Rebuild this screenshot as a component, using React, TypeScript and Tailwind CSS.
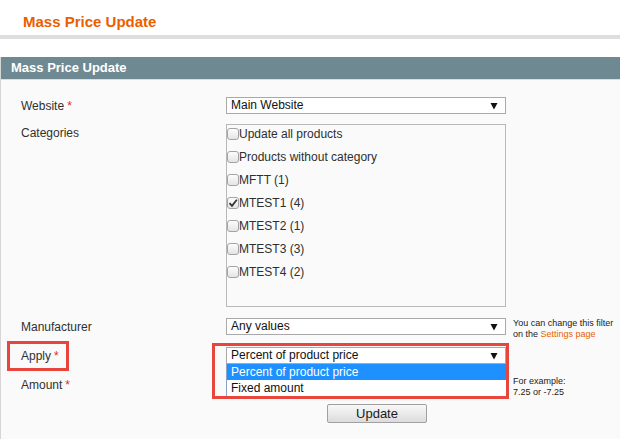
import { useState } from "react";

const font = { fontFamily: '"Liberation Sans", Arial, sans-serif' };

const categories = [
  { label: "Update all products", checked: false },
  { label: "Products without category", checked: false },
  { label: "MFTT (1)", checked: false },
  { label: "MTEST1 (4)", checked: true },
  { label: "MTEST2 (1)", checked: false },
  { label: "MTEST3 (3)", checked: false },
  { label: "MTEST4 (2)", checked: false },
];

function Arrow() {
  return (
    <svg width="8" height="8" viewBox="0 0 8 8" className="shrink-0">
      <polygon points="0.5,1 7.5,1 4,7.5" fill="#111" />
    </svg>
  );
}

function Select({ value }: { value: string }) {
  return (
    <div className="flex h-[17px] w-[280px] items-center justify-between border border-[#a9a9a9] bg-white pl-[4px] pr-[7px] text-[12px] leading-[15px] text-[#111]">
      <span>{value}</span>
      <Arrow />
    </div>
  );
}

function Label({ text, required }: { text: string; required?: boolean }) {
  return (
    <div className="w-[205px] shrink-0 text-[12px] leading-[16px] text-[#303030]">
      {text}
      {required && <span className="ml-[3px] text-[#e02a1b]">*</span>}
    </div>
  );
}

function Checkbox({ checked }: { checked: boolean }) {
  return (
    <span className="mt-[2px] flex h-[12px] w-[12px] shrink-0 items-center justify-center rounded-[3px] border border-[#a3a3a3] bg-gradient-to-b from-[#fdfdfd] to-[#e4e4e4]">
      {checked && (
        <svg width="10" height="10" viewBox="0 0 10 10">
          <path d="M1.5 5.2 L4 7.8 L8.8 1.8" stroke="#333" strokeWidth="1.8" fill="none" />
        </svg>
      )}
    </span>
  );
}

export default function App() {
  const [items] = useState(categories);

  return (
    <div className="relative h-[439px] w-[620px] overflow-hidden bg-white" style={font}>
      <div className="h-[35px] pl-[23px] pt-[13px] text-[15px] font-bold leading-[18px] text-[#eb5e00]">
        Mass Price Update
      </div>
      <div className="h-[4px] bg-[#dedede]" />

      <div className="mt-[18px] border-b border-l border-[#d6d6d6] bg-[#fafafa]">
        <div className="h-[22px] bg-[#6f8992] pl-[10px] text-[13px] font-bold leading-[21px] text-white">
          Mass Price Update
        </div>
        <div className="h-px bg-[#d3dfe2]" />

        <div className="pl-[20px] pb-[14px] pt-[17px]">
          <div className="flex items-center">
            <Label text="Website" required />
            <Select value="Main Website" />
          </div>

          <div className="mt-[10px] flex items-start">
            <div className="pt-[1px]">
              <Label text="Categories" />
            </div>
            <div className="h-[183px] w-[280px] border border-[#b8b8b8] bg-[#fafafa] pt-[1px]">
              {items.map((c) => (
                <div key={c.label} className="flex h-[23px] items-start">
                  <Checkbox checked={c.checked} />
                  <span className="text-[12px] leading-[16px] text-[#2e2e2e]">{c.label}</span>
                </div>
              ))}
            </div>
          </div>

          <div className="mt-[11px] flex h-[17px] items-start">
            <div className="flex h-[17px] items-center">
              <Label text="Manufacturer" />
            </div>
            <Select value="Any values" />
            <div className="ml-[7px] text-[9px] leading-[11px] text-[#222]">
              You can change this filter
              <br />
              on the <span className="text-[#eb5e00]">Settings page</span>
            </div>
          </div>

          <div className="mt-[12px] flex items-center">
            <Label text="Apply" required />
            <div className="relative z-10">
              <Select value="Percent of product price" />
              <div className="absolute left-0 top-full w-[280px] border-l border-[#8aa4c8] bg-white text-[12px] leading-[16px]">
                <div className="bg-[#1e90ff] pl-[4px] text-white">Percent of product price</div>
                <div className="pl-[4px] text-[#111]">Fixed amount</div>
              </div>
            </div>
          </div>

          <div className="mt-[12px] flex h-[17px] items-start">
            <div className="flex h-[17px] items-center">
              <Label text="Amount" required />
            </div>
            <div className="h-[17px] w-[280px] border border-[#a9a9a9] bg-white" />
            <div className="ml-[7px] text-[9px] leading-[11px] text-[#222]">
              For example:
              <br />
              7.25 or -7.25
            </div>
          </div>

          <div className="mt-[8px] pl-[306px]">
            <button className="h-[19px] w-[100px] rounded-[2px] border border-[#a0a0a0] bg-gradient-to-b from-[#f8f8f8] to-[#dcdcdc] text-[13px] leading-[17px] text-[#1a1a1a]">
              Update
            </button>
          </div>
        </div>
      </div>

      <div className="pointer-events-none absolute left-[7px] top-[341px] h-[30px] w-[62px] border-[3px] border-[#e8453c]" />
      <div className="pointer-events-none absolute left-[212px] top-[343px] z-20 h-[56px] w-[297px] border-[3px] border-[#e8453c]" />
    </div>
  );
}
